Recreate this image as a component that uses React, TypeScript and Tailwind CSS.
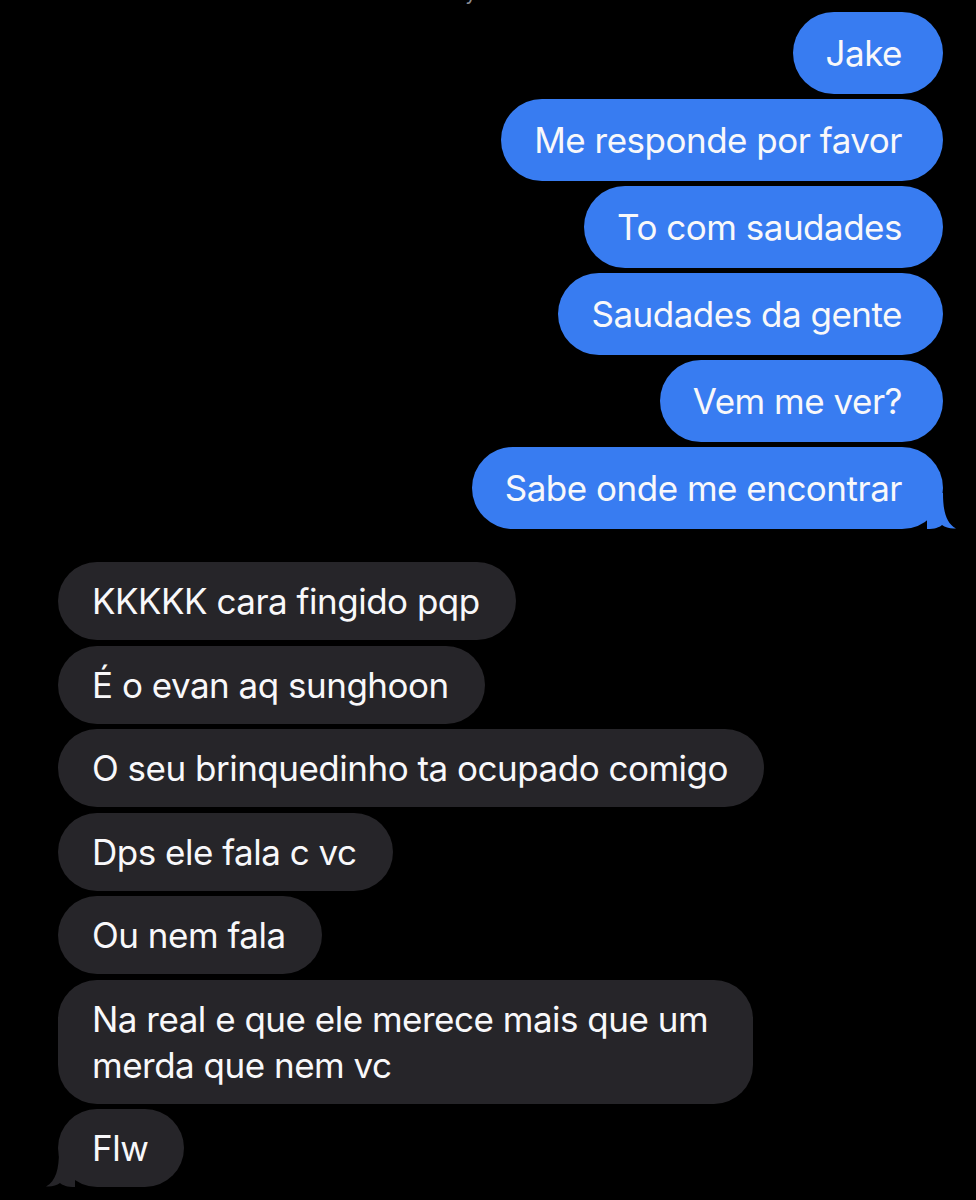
import type { ReactNode } from 'react'

const sent = ['Jake', 'Me responde por favor', 'To com saudades', 'Saudades da gente', 'Vem me ver?']

const received = [
  'KKKKK cara fingido pqp',
  'É o evan aq sunghoon',
  'O seu brinquedinho ta ocupado comigo',
  'Dps ele fala c vc',
  'Ou nem fala',
]

function Tail({ side, color }: { side: 'left' | 'right'; color: string }) {
  return (
    <svg
      viewBox="0 0 30 36"
      className={
        side === 'right'
          ? 'absolute -right-[14px] bottom-0 h-[36px] w-[30px]'
          : 'absolute -left-[13px] bottom-0 h-[36px] w-[30px] -scale-x-100'
      }
    >
      <path d="M0 0H16C16 18 19 30 29 35.5C23 36 18.5 34.5 15 32C12 34.5 8 36 0 36Z" fill={color} />
    </svg>
  )
}

function Sent({ children, tail }: { children: ReactNode; tail?: boolean }) {
  return (
    <div className="relative rounded-[41px] bg-[#387cf1] py-[20px] pl-[33px] pr-[41px] leading-[42px] text-[#f8f8fa]">
      {children}
      {tail && <Tail side="right" color="#387cf1" />}
    </div>
  )
}

function Received({ children, tail, multi }: { children: ReactNode; tail?: boolean; multi?: boolean }) {
  return (
    <div
      className={
        'relative rounded-[39px] bg-[#262529] pl-[34px] text-[#f8f8fa] ' +
        (multi ? 'pr-[45px] py-[16px] leading-[46px]' : 'pr-[36px] py-[19px] leading-[40px]')
      }
    >
      {children}
      {tail && <Tail side="left" color="#262529" />}
    </div>
  )
}

export default function App() {
  return (
    <div className="h-[1200px] w-[976px] overflow-hidden bg-black font-['Inter',sans-serif] text-[35px] tracking-[-0.5px]">
      <div className="flex h-[12px] justify-center overflow-hidden">
        <span className="-mt-[20px] text-[20px] leading-[26px] tracking-normal text-[#8d8d93]">Today 9:41 PM</span>
      </div>

      <div className="flex flex-col items-end gap-[5px] pr-[33px]">
        {sent.map((m) => (
          <Sent key={m}>{m}</Sent>
        ))}
        <Sent tail>Sabe onde me encontrar</Sent>
      </div>

      <div className="mt-[33px] flex flex-col items-start gap-[5.5px] pl-[58px]">
        {received.map((m) => (
          <Received key={m}>{m}</Received>
        ))}
        <Received multi>
          Na real e que ele merece mais que um
          <br />
          merda que nem vc
        </Received>
        <Received tail>Flw</Received>
      </div>
    </div>
  )
}
